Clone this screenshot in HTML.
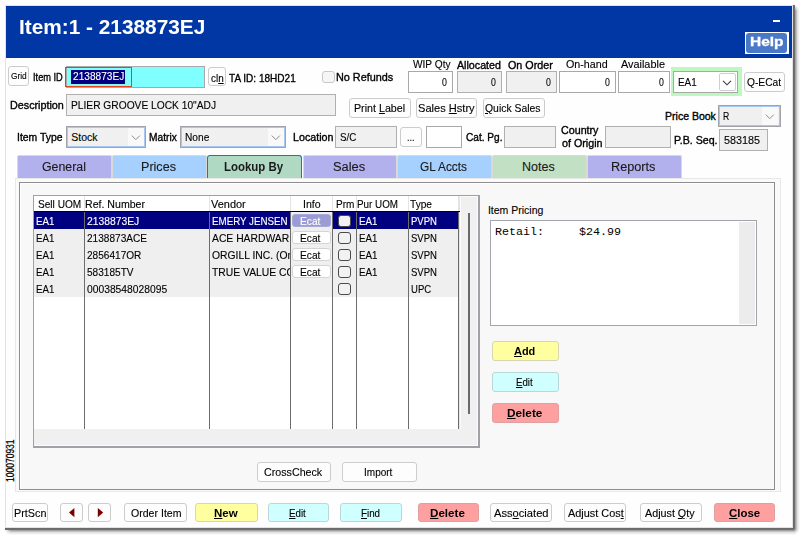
<!DOCTYPE html>
<html><head><meta charset="utf-8">
<style>
*{margin:0;padding:0;box-sizing:border-box}
html,body{width:804px;height:539px;overflow:hidden;background:#ffffff;font-family:"Liberation Sans",sans-serif;font-size:11px;color:#000}
.a{position:absolute}
.t{position:absolute;white-space:pre;line-height:1;transform-origin:0 0}
u{text-decoration:underline;text-underline-offset:1px}
</style></head><body>
<div class="a" style="left:5px;top:5px;width:788px;height:523px;background:#fefefe;border:1px solid #e2e2e2;"></div>
<div class="a" style="left:793px;top:5px;width:2px;height:523px;background:linear-gradient(to right,#686868 0px,#6e6e6e 1.5px,rgba(0,0,0,.45) 2px);"></div>
<div class="a" style="left:795px;top:5px;width:5px;height:523px;background:linear-gradient(to right,rgba(0,0,0,.42) 0px,rgba(0,0,0,.12) 2.5px,rgba(0,0,0,0) 5px);-webkit-mask-image:linear-gradient(to bottom,transparent 0,#000 6px);"></div>
<div class="a" style="left:5px;top:528px;width:788px;height:2px;background:linear-gradient(to bottom,#686868 0px,#6e6e6e 1.5px,rgba(0,0,0,.45) 2px);"></div>
<div class="a" style="left:5px;top:530px;width:788px;height:5px;background:linear-gradient(to bottom,rgba(0,0,0,.42) 0px,rgba(0,0,0,.12) 2.5px,rgba(0,0,0,0) 5px);-webkit-mask-image:linear-gradient(to right,transparent 0,#000 6px);"></div>
<div class="a" style="left:793px;top:528px;width:7px;height:7px;background:radial-gradient(circle at 0 0,#686868 0px,#6e6e6e 1.5px,rgba(0,0,0,.45) 2px,rgba(0,0,0,.12) 4.5px,rgba(0,0,0,0) 7px);"></div>
<div class="a" style="left:6px;top:6px;width:786px;height:52px;background:#0037a5;"></div>
<div class="t" style="left:19.38px;top:16.67px;font-size:20px;color:#fff;font-weight:bold;transform:scaleX(1.0405);">Item:1 - 2138873EJ</div>
<div class="a" style="left:773px;top:20px;width:7px;height:2px;background:#fff;"></div>
<div class="a" style="left:745px;top:32px;width:44px;height:22px;background:#fff;"></div>
<div class="a" style="left:746px;top:33px;width:41px;height:20px;background:#4a78c8;border-radius:3px;"></div>
<div class="t" style="left:750.40px;top:35.82px;font-size:12.5px;color:#fff;font-weight:bold;transform:scaleX(1.2376);-webkit-text-stroke:0.3px #fff;">Help</div>
<div class="a" style="left:8px;top:66px;width:21px;height:20px;background:#fdfdfd;border:1px solid #cccccc;border-radius:3px;"></div>
<div class="t" style="left:10.60px;top:70.76px;font-size:9.5px;color:#000;-webkit-text-stroke:0.12px #000;transform:scaleX(0.8778);">Grid</div>
<div class="t" style="left:33.32px;top:71.81px;font-size:10.5px;color:#000;-webkit-text-stroke:0.35px #000;transform:scaleX(0.8797);">Item ID</div>
<div class="a" style="left:66px;top:66px;width:139px;height:22px;background:#80ffff;border:1px solid #a8a8a8;"></div>
<div class="a" style="left:65px;top:67px;width:67px;height:20px;border:1px solid #e8401c;"></div>
<div class="a" style="left:71px;top:70px;width:54px;height:14px;background:#000080;"></div>
<div class="t" style="left:72.68px;top:71.09px;font-size:11px;color:#fff;-webkit-text-stroke:0.12px #fff;transform:scaleX(0.9201);">2138873EJ</div>
<div class="a" style="left:208px;top:67px;width:18px;height:19px;background:#fdfdfd;border:1px solid #cccccc;border-radius:3px;"></div>
<div class="t" style="left:211.12px;top:72.71px;font-size:10.5px;color:#000;-webkit-text-stroke:0.12px #000;transform:scaleX(0.9421);">cl<u>n</u></div>
<div class="t" style="left:228.88px;top:72.59px;font-size:11px;color:#000;-webkit-text-stroke:0.35px #000;transform:scaleX(0.9124);">TA ID: 18HD21</div>
<div class="a" style="left:322px;top:71px;width:13px;height:12px;background:#f6f6f6;border:1px solid #c8c8c8;border-radius:3px;"></div>
<div class="t" style="left:336.48px;top:71.69px;font-size:11px;color:#000;-webkit-text-stroke:0.35px #000;transform:scaleX(0.9852);">No Refunds</div>
<div class="t" style="left:412.88px;top:60.23px;font-size:10px;color:#000;-webkit-text-stroke:0.12px #000;transform:scaleX(1.0125);">WIP Qty</div>
<div class="t" style="left:457.36px;top:59.81px;font-size:10.5px;color:#000;-webkit-text-stroke:0.35px #000;transform:scaleX(1.0173);">Allocated</div>
<div class="t" style="left:508.26px;top:59.81px;font-size:10.5px;color:#000;-webkit-text-stroke:0.35px #000;transform:scaleX(1.0222);">On Order</div>
<div class="t" style="left:566.46px;top:60.23px;font-size:10px;color:#000;-webkit-text-stroke:0.12px #000;transform:scaleX(1.0710);">On-hand</div>
<div class="t" style="left:621.38px;top:60.23px;font-size:10px;color:#000;-webkit-text-stroke:0.12px #000;transform:scaleX(1.0874);">Available</div>
<div class="a" style="left:408px;top:71px;width:45px;height:22px;background:#fff;border:1px solid #a8a8a8;"></div>
<div class="a" style="left:457px;top:71px;width:45px;height:22px;background:#f0f0f0;border:1px solid #b0b0b0;"></div>
<div class="a" style="left:506px;top:71px;width:51px;height:22px;background:#f0f0f0;border:1px solid #b0b0b0;"></div>
<div class="a" style="left:559px;top:71px;width:57px;height:22px;background:#fff;border:1px solid #a8a8a8;"></div>
<div class="a" style="left:618px;top:71px;width:52px;height:22px;background:#fff;border:1px solid #a8a8a8;"></div>
<div class="t" style="left:441.54px;top:77.01px;font-size:10.5px;color:#000;-webkit-text-stroke:0.12px #000;transform:scaleX(0.8340);">0</div>
<div class="t" style="left:490.70px;top:77.01px;font-size:10.5px;color:#000;-webkit-text-stroke:0.12px #000;transform:scaleX(0.8340);">0</div>
<div class="t" style="left:545.54px;top:77.01px;font-size:10.5px;color:#000;-webkit-text-stroke:0.12px #000;transform:scaleX(0.8340);">0</div>
<div class="t" style="left:604.56px;top:77.01px;font-size:10.5px;color:#000;-webkit-text-stroke:0.12px #000;transform:scaleX(0.8340);">0</div>
<div class="t" style="left:658.54px;top:77.01px;font-size:10.5px;color:#000;-webkit-text-stroke:0.12px #000;transform:scaleX(0.8340);">0</div>
<div class="a" style="left:671px;top:67px;width:71px;height:29px;background:#bff7c0;"></div>
<div class="a" style="left:673px;top:71px;width:65px;height:22px;background:#fff;border:1px solid #a8a8a8;"></div>
<div class="a" style="left:719px;top:73px;width:17px;height:18px;background:#fff;border:1px solid #cfcfcf;border-radius:2px;"></div>
<svg class="a" style="left:722px;top:80px" width="10" height="6"><path d="M1 0.8 L5 4.8 L9 0.8" fill="none" stroke="#3c3c3c" stroke-width="1.1"/></svg>
<div class="t" style="left:678.22px;top:76.79px;font-size:11px;color:#000;-webkit-text-stroke:0.12px #000;transform:scaleX(0.9012);">EA1</div>
<div class="a" style="left:744px;top:72px;width:41px;height:20px;background:#fdfdfd;border:1px solid #cccccc;border-radius:3px;"></div>
<div class="t" style="left:747.28px;top:76.69px;font-size:11px;color:#000;-webkit-text-stroke:0.12px #000;transform:scaleX(0.9283);">Q-ECat</div>
<div class="t" style="left:9.96px;top:99.81px;font-size:10.5px;color:#000;-webkit-text-stroke:0.35px #000;transform:scaleX(1.0251);">Description</div>
<div class="a" style="left:66px;top:94px;width:270px;height:22px;background:#f0f0f0;border:1px solid #b0b0b0;"></div>
<div class="t" style="left:71.36px;top:99.81px;font-size:10.5px;color:#000;-webkit-text-stroke:0.12px #000;transform:scaleX(0.9731);">PLIER GROOVE LOCK 10"ADJ</div>
<div class="a" style="left:349px;top:98px;width:62px;height:20px;background:#fdfdfd;border:1px solid #cccccc;border-radius:3px;"></div>
<div class="t" style="left:354.34px;top:103.01px;font-size:10.5px;color:#000;-webkit-text-stroke:0.12px #000;transform:scaleX(1.0171);">Print <u>L</u>abel</div>
<div class="a" style="left:416px;top:98px;width:61px;height:20px;background:#fdfdfd;border:1px solid #cccccc;border-radius:3px;"></div>
<div class="t" style="left:417.86px;top:103.01px;font-size:10.5px;color:#000;-webkit-text-stroke:0.12px #000;transform:scaleX(1.0545);">Sales <u>H</u>stry</div>
<div class="a" style="left:483px;top:98px;width:62px;height:20px;background:#fdfdfd;border:1px solid #cccccc;border-radius:3px;"></div>
<div class="t" style="left:485.16px;top:103.01px;font-size:10.5px;color:#000;-webkit-text-stroke:0.12px #000;transform:scaleX(0.9904);"><u>Q</u>uick Sales</div>
<div class="t" style="left:665.10px;top:110.81px;font-size:10.5px;color:#000;-webkit-text-stroke:0.35px #000;">Price Book</div>
<div class="a" style="left:718px;top:105px;width:63px;height:22px;background:#f0f0f0;border:1px solid #a2a2aa;box-shadow:inset 0 0 0 1px #a9c8ef;"></div>
<div class="a" style="left:762px;top:107px;width:16px;height:18px;background:#f9f9f9;"></div>
<svg class="a" style="left:765px;top:114px" width="10" height="6"><path d="M0.8 0.6 L4.8 4.6 L8.8 0.6" fill="none" stroke="#8c8c8c" stroke-width="1"/></svg>
<div class="t" style="left:723.16px;top:110.81px;font-size:10.5px;color:#000;-webkit-text-stroke:0.12px #000;transform:scaleX(0.8262);">R</div>
<div class="t" style="left:17.34px;top:132.01px;font-size:10.5px;color:#000;-webkit-text-stroke:0.35px #000;transform:scaleX(0.9908);">Item Type</div>
<div class="a" style="left:66px;top:126px;width:80px;height:22px;background:#f0f0f0;border:1px solid #a2a2aa;box-shadow:inset 0 0 0 1px #a9c8ef;"></div>
<div class="a" style="left:128px;top:128px;width:16px;height:18px;background:#f9f9f9;"></div>
<svg class="a" style="left:131px;top:135px" width="10" height="6"><path d="M0.8 0.6 L4.8 4.6 L8.8 0.6" fill="none" stroke="#8c8c8c" stroke-width="1"/></svg>
<div class="t" style="left:71.32px;top:131.71px;font-size:10.5px;color:#000;-webkit-text-stroke:0.12px #000;">Stock</div>
<div class="t" style="left:149.20px;top:132.01px;font-size:10.5px;color:#000;-webkit-text-stroke:0.35px #000;transform:scaleX(0.9712);">Matrix</div>
<div class="a" style="left:180px;top:126px;width:106px;height:22px;background:#f0f0f0;border:1px solid #a2a2aa;box-shadow:inset 0 0 0 1px #a9c8ef;"></div>
<div class="a" style="left:268px;top:128px;width:16px;height:18px;background:#f9f9f9;"></div>
<svg class="a" style="left:271px;top:135px" width="10" height="6"><path d="M0.8 0.6 L4.8 4.6 L8.8 0.6" fill="none" stroke="#8c8c8c" stroke-width="1"/></svg>
<div class="t" style="left:185.42px;top:132.01px;font-size:10.5px;color:#000;-webkit-text-stroke:0.12px #000;transform:scaleX(0.9672);">None</div>
<div class="t" style="left:292.60px;top:132.01px;font-size:10.5px;color:#000;-webkit-text-stroke:0.35px #000;transform:scaleX(1.0177);">Location</div>
<div class="a" style="left:335px;top:126px;width:62px;height:22px;background:#f0f0f0;border:1px solid #b0b0b0;"></div>
<div class="t" style="left:340.28px;top:132.01px;font-size:10.5px;color:#000;-webkit-text-stroke:0.12px #000;transform:scaleX(0.9314);">S/C</div>
<div class="a" style="left:400px;top:127px;width:22px;height:20px;background:#fdfdfd;border:1px solid #cccccc;border-radius:3px;"></div>
<div class="t" style="left:406.80px;top:132.01px;font-size:10.5px;color:#000;-webkit-text-stroke:0.12px #000;transform:scaleX(0.8686);">...</div>
<div class="a" style="left:426px;top:126px;width:36px;height:22px;background:#fff;border:1px solid #a8a8a8;"></div>
<div class="t" style="left:466.22px;top:132.01px;font-size:10.5px;color:#000;-webkit-text-stroke:0.35px #000;transform:scaleX(0.9616);">Cat. Pg.</div>
<div class="a" style="left:504px;top:126px;width:52px;height:22px;background:#f0f0f0;border:1px solid #b0b0b0;"></div>
<div class="t" style="left:561.42px;top:125.41px;font-size:10.5px;color:#000;-webkit-text-stroke:0.35px #000;transform:scaleX(1.0192);">Country</div>
<div class="t" style="left:561.50px;top:138.01px;font-size:10.5px;color:#000;-webkit-text-stroke:0.35px #000;transform:scaleX(1.0196);">of Origin</div>
<div class="a" style="left:605px;top:126px;width:66px;height:22px;background:#f0f0f0;border:1px solid #b0b0b0;"></div>
<div class="t" style="left:674.12px;top:134.81px;font-size:10.5px;color:#000;-webkit-text-stroke:0.35px #000;transform:scaleX(1.0130);">P.B. Seq.</div>
<div class="a" style="left:719px;top:129px;width:49px;height:22px;background:#f0f0f0;border:1px solid #b0b0b0;"></div>
<div class="t" style="left:724.18px;top:134.81px;font-size:10.5px;color:#000;-webkit-text-stroke:0.12px #000;transform:scaleX(1.0288);">583185</div>
<div class="a" style="left:15px;top:178px;width:766px;height:314px;background:#fafafa;border:1px solid #e8e8e8;"></div>
<div class="a" style="left:19px;top:182px;width:756px;height:308px;background:#f8f8f8;border:1px solid #8e8e8e;box-shadow:inset 1px 1px 0 #ffffff;"></div>
<div class="a" style="left:17px;top:155px;width:95px;height:23px;background:#b3b0ee;border:1px solid #dcd8d4;border-bottom:none;border-radius:2px 2px 0 0;"></div>
<div class="t" style="left:42.18px;top:160.52px;font-size:12.5px;color:#1a1a1a;-webkit-text-stroke:0.12px #1a1a1a;transform:scaleX(0.9888);">General</div>
<div class="a" style="left:112px;top:155px;width:95px;height:23px;background:#a6d1fe;border:1px solid #dcd8d4;border-bottom:none;border-radius:2px 2px 0 0;"></div>
<div class="t" style="left:141.02px;top:160.52px;font-size:12.5px;color:#1a1a1a;-webkit-text-stroke:0.12px #1a1a1a;transform:scaleX(1.0056);">Prices</div>
<div class="a" style="left:207px;top:155px;width:95px;height:23px;background:#b0d9c4;border:1px solid #1774d0;border-bottom:none;border-radius:3px 3px 0 0;"></div>
<div class="t" style="left:224.40px;top:160.52px;font-size:12.5px;color:#1a1a1a;font-weight:bold;transform:scaleX(0.9157);">Lookup By</div>
<div class="a" style="left:303px;top:155px;width:94px;height:23px;background:#b3b0ee;border:1px solid #dcd8d4;border-bottom:none;border-radius:2px 2px 0 0;"></div>
<div class="t" style="left:332.68px;top:160.52px;font-size:12.5px;color:#1a1a1a;-webkit-text-stroke:0.12px #1a1a1a;transform:scaleX(1.0303);">Sales</div>
<div class="a" style="left:397px;top:155px;width:95px;height:23px;background:#a6d1fe;border:1px solid #dcd8d4;border-bottom:none;border-radius:2px 2px 0 0;"></div>
<div class="t" style="left:420.38px;top:160.52px;font-size:12.5px;color:#1a1a1a;-webkit-text-stroke:0.12px #1a1a1a;transform:scaleX(0.9480);">GL Accts</div>
<div class="a" style="left:492px;top:155px;width:95px;height:23px;background:#c2e1c4;border:1px solid #dcd8d4;border-bottom:none;border-radius:2px 2px 0 0;"></div>
<div class="t" style="left:522.10px;top:160.52px;font-size:12.5px;color:#1a1a1a;-webkit-text-stroke:0.12px #1a1a1a;">Notes</div>
<div class="a" style="left:587px;top:155px;width:95px;height:23px;background:#b3b0ee;border:1px solid #dcd8d4;border-bottom:none;border-radius:2px 2px 0 0;"></div>
<div class="t" style="left:611.36px;top:160.52px;font-size:12.5px;color:#1a1a1a;-webkit-text-stroke:0.12px #1a1a1a;transform:scaleX(1.0142);">Reports</div>
<div class="a" style="left:33px;top:195px;width:447px;height:253px;background:#f0f0f0;border:1px solid #a0a0a6;border-right-width:2px;border-bottom-width:2px;box-shadow:inset -1px -1px 0 #fbfbfb;"></div>
<div class="a" style="left:34px;top:196px;width:425px;height:233px;background:#fff;"></div>
<div class="a" style="left:459px;top:196px;width:1px;height:233px;background:#e4e4e4;"></div>
<div class="a" style="left:460px;top:196px;width:1px;height:233px;background:#fcfcfc;"></div>
<div class="a" style="left:461px;top:196px;width:16px;height:1px;background:#fcfcfc;"></div>
<div class="a" style="left:34px;top:211px;width:426px;height:1px;background:#000;"></div>
<div class="a" style="left:34px;top:212px;width:425px;height:17px;background:#000080;"></div>
<div class="a" style="left:34px;top:229px;width:425px;height:17px;background:#efefef;"></div>
<div class="a" style="left:34px;top:246px;width:425px;height:17px;background:#efefef;"></div>
<div class="a" style="left:34px;top:263px;width:425px;height:17px;background:#efefef;"></div>
<div class="a" style="left:34px;top:280px;width:425px;height:17px;background:#efefef;"></div>
<div class="a" style="left:291px;top:212px;width:41px;height:17px;background:#efefef;"></div>
<div class="a" style="left:84px;top:196px;width:1px;height:15px;background:#e4e4e4;"></div>
<div class="a" style="left:84px;top:212px;width:1px;height:217px;background:#6c6c6c;"></div>
<div class="a" style="left:209px;top:196px;width:1px;height:15px;background:#e4e4e4;"></div>
<div class="a" style="left:209px;top:212px;width:1px;height:217px;background:#6c6c6c;"></div>
<div class="a" style="left:290px;top:196px;width:1px;height:15px;background:#e4e4e4;"></div>
<div class="a" style="left:290px;top:212px;width:1px;height:217px;background:#6c6c6c;"></div>
<div class="a" style="left:332px;top:196px;width:1px;height:15px;background:#e4e4e4;"></div>
<div class="a" style="left:332px;top:212px;width:1px;height:217px;background:#6c6c6c;"></div>
<div class="a" style="left:356px;top:196px;width:1px;height:15px;background:#e4e4e4;"></div>
<div class="a" style="left:356px;top:212px;width:1px;height:217px;background:#6c6c6c;"></div>
<div class="a" style="left:408px;top:196px;width:1px;height:15px;background:#e4e4e4;"></div>
<div class="a" style="left:408px;top:212px;width:1px;height:217px;background:#6c6c6c;"></div>
<div class="a" style="left:458px;top:196px;width:1px;height:15px;background:#e4e4e4;"></div>
<div class="a" style="left:458px;top:212px;width:1px;height:217px;background:#6c6c6c;"></div>
<div class="a" style="left:468px;top:213px;width:2px;height:201px;background:#6a6a6a;"></div>
<div class="t" style="left:38.04px;top:199.01px;font-size:10.5px;color:#000;-webkit-text-stroke:0.12px #000;transform:scaleX(0.9624);">Sell UOM</div>
<div class="t" style="left:84.74px;top:199.01px;font-size:10.5px;color:#000;-webkit-text-stroke:0.12px #000;transform:scaleX(1.0083);">Ref. Number</div>
<div class="t" style="left:210.88px;top:199.01px;font-size:10.5px;color:#000;-webkit-text-stroke:0.12px #000;transform:scaleX(1.0443);">Vendor</div>
<div class="t" style="left:303.20px;top:199.01px;font-size:10.5px;color:#000;-webkit-text-stroke:0.12px #000;transform:scaleX(1.0057);">Info</div>
<div class="t" style="left:335.88px;top:199.01px;font-size:10.5px;color:#000;-webkit-text-stroke:0.12px #000;transform:scaleX(0.9558);">Prm</div>
<div class="t" style="left:357.40px;top:199.01px;font-size:10.5px;color:#000;-webkit-text-stroke:0.12px #000;transform:scaleX(0.9371);">Pur UOM</div>
<div class="t" style="left:409.86px;top:199.01px;font-size:10.5px;color:#000;-webkit-text-stroke:0.12px #000;transform:scaleX(0.9670);">Type</div>
<div class="t" style="left:36.02px;top:216.11px;font-size:10.5px;color:#fff;-webkit-text-stroke:0.12px #fff;transform:scaleX(0.9250);">EA1</div>
<div class="t" style="left:87.30px;top:216.11px;font-size:10.5px;color:#fff;-webkit-text-stroke:0.12px #fff;transform:scaleX(0.9830);">2138873EJ</div>
<div class="a" style="left:210px;top:212px;width:80px;height:17px;overflow:hidden">
<div class="t" style="left:2.20px;top:4.11px;font-size:10.5px;color:#fff;-webkit-text-stroke:0.12px #fff;transform:scaleX(0.93)">EMERY JENSEN</div></div>
<div class="t" style="left:359.02px;top:216.11px;font-size:10.5px;color:#fff;-webkit-text-stroke:0.12px #fff;transform:scaleX(0.9300);">EA1</div>
<div class="t" style="left:411.32px;top:216.11px;font-size:10.5px;color:#fff;-webkit-text-stroke:0.12px #fff;transform:scaleX(0.9100);">PVPN</div>
<div class="a" style="left:292px;top:214px;width:39px;height:13px;background:#9c9cd4;border:1px solid #a8a8dc;border-radius:3px;"></div>
<div class="t" style="left:300.46px;top:216.11px;font-size:10.5px;color:#fff;-webkit-text-stroke:0.12px #fff;transform:scaleX(0.9714);">Ecat</div>
<div class="a" style="left:338px;top:215px;width:13px;height:12px;background:#f2f2f2;border:1px solid #4a4a4a;border-radius:3px;"></div>
<div class="t" style="left:36.02px;top:233.11px;font-size:10.5px;color:#000;-webkit-text-stroke:0.12px #000;transform:scaleX(0.9250);">EA1</div>
<div class="t" style="left:87.30px;top:233.11px;font-size:10.5px;color:#000;-webkit-text-stroke:0.12px #000;transform:scaleX(0.9600);">2138873ACE</div>
<div class="a" style="left:210px;top:229px;width:80px;height:17px;overflow:hidden">
<div class="t" style="left:2.20px;top:4.11px;font-size:10.5px;color:#000;-webkit-text-stroke:0.12px #000;transform:scaleX(0.985)">ACE HARDWARE</div></div>
<div class="t" style="left:359.02px;top:233.11px;font-size:10.5px;color:#000;-webkit-text-stroke:0.12px #000;transform:scaleX(0.9300);">EA1</div>
<div class="t" style="left:411.32px;top:233.11px;font-size:10.5px;color:#000;-webkit-text-stroke:0.12px #000;transform:scaleX(0.9100);">SVPN</div>
<div class="a" style="left:292px;top:231px;width:39px;height:13px;background:#fff;border:1px solid #d4d4d4;border-radius:3px;"></div>
<div class="t" style="left:300.46px;top:233.11px;font-size:10.5px;color:#000;-webkit-text-stroke:0.12px #000;transform:scaleX(0.9714);">Ecat</div>
<div class="a" style="left:338px;top:232px;width:13px;height:12px;background:#f2f2f2;border:1px solid #4a4a4a;border-radius:3px;"></div>
<div class="t" style="left:36.02px;top:250.11px;font-size:10.5px;color:#000;-webkit-text-stroke:0.12px #000;transform:scaleX(0.9250);">EA1</div>
<div class="t" style="left:87.30px;top:250.11px;font-size:10.5px;color:#000;-webkit-text-stroke:0.12px #000;transform:scaleX(0.9600);">2856417OR</div>
<div class="a" style="left:210px;top:246px;width:80px;height:17px;overflow:hidden">
<div class="t" style="left:2.20px;top:4.11px;font-size:10.5px;color:#000;-webkit-text-stroke:0.12px #000;transform:scaleX(0.985)">ORGILL INC. (Orgill)</div></div>
<div class="t" style="left:359.02px;top:250.11px;font-size:10.5px;color:#000;-webkit-text-stroke:0.12px #000;transform:scaleX(0.9300);">EA1</div>
<div class="t" style="left:411.32px;top:250.11px;font-size:10.5px;color:#000;-webkit-text-stroke:0.12px #000;transform:scaleX(0.9100);">SVPN</div>
<div class="a" style="left:292px;top:248px;width:39px;height:13px;background:#fff;border:1px solid #d4d4d4;border-radius:3px;"></div>
<div class="t" style="left:300.46px;top:250.11px;font-size:10.5px;color:#000;-webkit-text-stroke:0.12px #000;transform:scaleX(0.9714);">Ecat</div>
<div class="a" style="left:338px;top:249px;width:13px;height:12px;background:#f2f2f2;border:1px solid #4a4a4a;border-radius:3px;"></div>
<div class="t" style="left:36.02px;top:267.11px;font-size:10.5px;color:#000;-webkit-text-stroke:0.12px #000;transform:scaleX(0.9250);">EA1</div>
<div class="t" style="left:87.30px;top:267.11px;font-size:10.5px;color:#000;-webkit-text-stroke:0.12px #000;transform:scaleX(0.9600);">583185TV</div>
<div class="a" style="left:210px;top:263px;width:80px;height:17px;overflow:hidden">
<div class="t" style="left:2.20px;top:4.11px;font-size:10.5px;color:#000;-webkit-text-stroke:0.12px #000;transform:scaleX(0.985)">TRUE VALUE CO</div></div>
<div class="t" style="left:359.02px;top:267.11px;font-size:10.5px;color:#000;-webkit-text-stroke:0.12px #000;transform:scaleX(0.9300);">EA1</div>
<div class="t" style="left:411.32px;top:267.11px;font-size:10.5px;color:#000;-webkit-text-stroke:0.12px #000;transform:scaleX(0.9100);">SVPN</div>
<div class="a" style="left:292px;top:265px;width:39px;height:13px;background:#fff;border:1px solid #d4d4d4;border-radius:3px;"></div>
<div class="t" style="left:300.46px;top:267.11px;font-size:10.5px;color:#000;-webkit-text-stroke:0.12px #000;transform:scaleX(0.9714);">Ecat</div>
<div class="a" style="left:338px;top:266px;width:13px;height:12px;background:#f2f2f2;border:1px solid #4a4a4a;border-radius:3px;"></div>
<div class="t" style="left:36.02px;top:284.11px;font-size:10.5px;color:#000;-webkit-text-stroke:0.12px #000;transform:scaleX(0.9250);">EA1</div>
<div class="t" style="left:87.30px;top:284.11px;font-size:10.5px;color:#000;-webkit-text-stroke:0.12px #000;transform:scaleX(0.9800);">00038548028095</div>
<div class="t" style="left:411.32px;top:284.11px;font-size:10.5px;color:#000;-webkit-text-stroke:0.12px #000;transform:scaleX(0.9100);">UPC</div>
<div class="a" style="left:338px;top:283px;width:13px;height:12px;background:#f2f2f2;border:1px solid #4a4a4a;border-radius:3px;"></div>
<div class="t" style="left:487.88px;top:205.01px;font-size:10.5px;color:#000;-webkit-text-stroke:0.12px #000;">Item Pricing</div>
<div class="a" style="left:490px;top:220px;width:267px;height:106px;background:#fff;border:1px solid #a4a4ac;"></div>
<div class="a" style="left:739px;top:222px;width:16px;height:102px;background:#ececec;"></div>
<div class="t" style="left:495px;top:227px;font-family:'Liberation Mono',monospace;font-size:11.67px">Retail:     $24.99</div>
<div class="a" style="left:492px;top:341px;width:67px;height:20px;background:#ffffa0;border:1px solid #d6d6b0;border-radius:3px;"></div>
<div class="t" style="left:514.32px;top:346.11px;font-size:10.5px;color:#000;font-weight:bold;transform:scaleX(1.0405);"><u>A</u>dd</div>
<div class="a" style="left:492px;top:372px;width:67px;height:20px;background:#d0ffff;border:1px solid #b8d8d8;border-radius:3px;"></div>
<div class="t" style="left:516.30px;top:377.01px;font-size:10.5px;color:#000;-webkit-text-stroke:0.12px #000;transform:scaleX(0.9214);"><u>E</u>dit</div>
<div class="a" style="left:492px;top:403px;width:67px;height:20px;background:#ffa0a0;border:1px solid #e0a0a0;border-radius:3px;"></div>
<div class="t" style="left:506.82px;top:407.91px;font-size:10.5px;color:#000;font-weight:bold;transform:scaleX(1.1232);"><u>D</u>elete</div>
<div class="a" style="left:257px;top:462px;width:74px;height:20px;background:#fdfdfd;border:1px solid #cccccc;border-radius:3px;"></div>
<div class="t" style="left:264.12px;top:466.91px;font-size:10.5px;color:#000;-webkit-text-stroke:0.12px #000;transform:scaleX(1.0180);">CrossCheck</div>
<div class="a" style="left:342px;top:462px;width:75px;height:20px;background:#fdfdfd;border:1px solid #cccccc;border-radius:3px;"></div>
<div class="t" style="left:364.16px;top:466.91px;font-size:10.5px;color:#000;-webkit-text-stroke:0.12px #000;transform:scaleX(0.9546);">Import</div>
<div class="t" style="left:4.6px;top:482px;font-size:10.5px;-webkit-text-stroke:0.25px #000;transform-origin:0 0;transform:rotate(-90deg) scaleX(0.81)">100070931</div>
<div class="a" style="left:12px;top:503px;width:36px;height:19px;background:#fdfdfd;border:1px solid #cccccc;border-radius:3px;"></div>
<div class="t" style="left:14.26px;top:507.81px;font-size:10.5px;color:#000;-webkit-text-stroke:0.12px #000;transform:scaleX(1.0281);">PrtScn</div>
<div class="a" style="left:60px;top:503px;width:23px;height:19px;background:#fdfdfd;border:1px solid #cccccc;border-radius:3px;"></div>
<svg class="a" style="left:68px;top:508px" width="7" height="10"><path d="M6.4 0 L1 4.6 L6.4 9.2 Z" fill="#7a0000"/></svg>
<div class="a" style="left:88px;top:503px;width:23px;height:19px;background:#fdfdfd;border:1px solid #cccccc;border-radius:3px;"></div>
<svg class="a" style="left:97px;top:508px" width="7" height="10"><path d="M0.8 0 L6.2 4.6 L0.8 9.2 Z" fill="#7a0000"/></svg>
<div class="a" style="left:124px;top:503px;width:63px;height:19px;background:#fdfdfd;border:1px solid #cccccc;border-radius:3px;"></div>
<div class="t" style="left:130.86px;top:508.11px;font-size:10.5px;color:#000;-webkit-text-stroke:0.12px #000;transform:scaleX(1.0065);">Order Item</div>
<div class="a" style="left:195px;top:503px;width:63px;height:19px;background:#ffffa0;border:1px solid #d6d6b0;border-radius:3px;"></div>
<div class="t" style="left:214.02px;top:508.11px;font-size:10.5px;color:#000;font-weight:bold;transform:scaleX(1.0960);"><u>N</u>ew</div>
<div class="a" style="left:268px;top:503px;width:61px;height:19px;background:#d0ffff;border:1px solid #b8d8d8;border-radius:3px;"></div>
<div class="t" style="left:288.62px;top:508.11px;font-size:10.5px;color:#000;-webkit-text-stroke:0.12px #000;transform:scaleX(0.9269);"><u>E</u>dit</div>
<div class="a" style="left:340px;top:503px;width:62px;height:19px;background:#d0ffff;border:1px solid #b8d8d8;border-radius:3px;"></div>
<div class="t" style="left:361.38px;top:508.11px;font-size:10.5px;color:#000;-webkit-text-stroke:0.12px #000;transform:scaleX(0.9325);"><u>F</u>ind</div>
<div class="a" style="left:418px;top:503px;width:61px;height:19px;background:#ffa0a0;border:1px solid #e0a0a0;border-radius:3px;"></div>
<div class="t" style="left:429.70px;top:508.11px;font-size:10.5px;color:#000;font-weight:bold;transform:scaleX(1.1055);"><u>D</u>elete</div>
<div class="a" style="left:490px;top:503px;width:62px;height:19px;background:#fdfdfd;border:1px solid #cccccc;border-radius:3px;"></div>
<div class="t" style="left:493.84px;top:508.11px;font-size:10.5px;color:#000;-webkit-text-stroke:0.12px #000;transform:scaleX(1.0616);">Ass<u>o</u>ciated</div>
<div class="a" style="left:564px;top:503px;width:62px;height:19px;background:#fdfdfd;border:1px solid #cccccc;border-radius:3px;"></div>
<div class="t" style="left:567.62px;top:508.11px;font-size:10.5px;color:#000;-webkit-text-stroke:0.12px #000;transform:scaleX(1.0367);">Adjust Cos<u>t</u></div>
<div class="a" style="left:640px;top:503px;width:62px;height:19px;background:#fdfdfd;border:1px solid #cccccc;border-radius:3px;"></div>
<div class="t" style="left:645.02px;top:508.11px;font-size:10.5px;color:#000;-webkit-text-stroke:0.12px #000;transform:scaleX(1.0235);">Adjust <u>Q</u>ty</div>
<div class="a" style="left:714px;top:503px;width:61px;height:19px;background:#ffa0a0;border:1px solid #e0a0a0;border-radius:3px;"></div>
<div class="t" style="left:728.76px;top:508.11px;font-size:10.5px;color:#000;font-weight:bold;transform:scaleX(1.0893);"><u>C</u>lose</div>
</body></html>
